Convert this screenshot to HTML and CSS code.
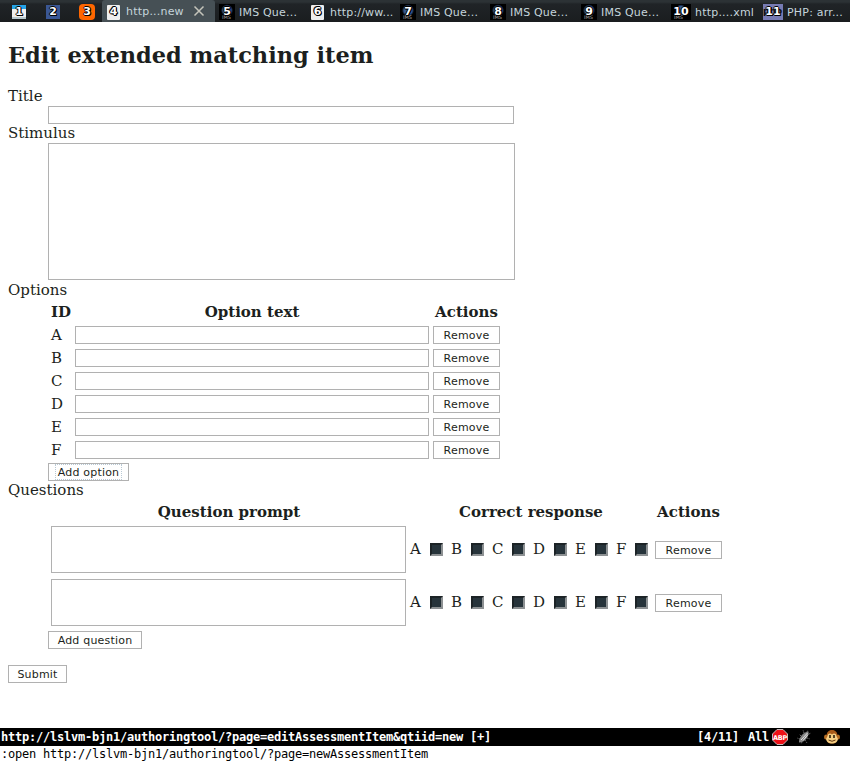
FILE: index.html
```html
<!DOCTYPE html>
<html lang="en">
<head>
<meta charset="utf-8">
<title>Edit extended matching item</title>
<link rel="stylesheet" href="styles.css">
</head>
<body>
<nav class="tabs">
  <div class="tab pinned p1"><span class="fav google"><b>1</b></span></div>
  <div class="tab pinned p2"><span class="fav blue"><b>2</b></span></div>
  <div class="tab pinned p3"><span class="fav orange"><b>3</b></span></div>
  <div class="tab active"><span class="fav page"><b>4</b></span><span class="name">http...new</span><svg class="close" viewBox="0 0 12 12"><path d="M1.500 1.500 10.500 10.500M10.500 1.500 1.500 10.500"/></svg></div>
  <div class="tab t5"><span class="fav ims"><i>IMS</i><b>5</b></span><span class="name">IMS Que...</span></div>
  <div class="tab t6"><span class="fav page"><b>6</b></span><span class="name">http://ww...</span></div>
  <div class="tab t7"><span class="fav ims"><i>IMS</i><b>7</b></span><span class="name">IMS Que...</span></div>
  <div class="tab t8"><span class="fav ims"><i>IMS</i><b>8</b></span><span class="name">IMS Que...</span></div>
  <div class="tab t9"><span class="fav ims"><i>IMS</i><b>9</b></span><span class="name">IMS Que...</span></div>
  <div class="tab t10"><span class="fav ims wide"><i>IMS</i><b>10</b></span><span class="name">http....xml</span></div>
  <div class="tab t11"><span class="fav php wide"><em>php</em><b>11</b></span><span class="name">PHP: arr...</span></div>
</nav>
<main>
  <h1>Edit extended matching item</h1>
  <form>
    <dl>
      <dt>Title</dt>
      <dd class="title-field"><input class="field" type="text" aria-label="Title"></dd>
      <dt>Stimulus</dt>
      <dd class="stimulus-field"><textarea class="field" aria-label="Stimulus"></textarea></dd>
      <dt class="options-label">Options</dt>
      <dd class="options">
        <div class="option-row head"><span>ID</span><span>Option text</span><span>Actions</span></div>
        <div class="option-row"><span>A</span><input class="field" type="text"><button type="button">Remove</button></div>
        <div class="option-row"><span>B</span><input class="field" type="text"><button type="button">Remove</button></div>
        <div class="option-row"><span>C</span><input class="field" type="text"><button type="button">Remove</button></div>
        <div class="option-row"><span>D</span><input class="field" type="text"><button type="button">Remove</button></div>
        <div class="option-row"><span>E</span><input class="field" type="text"><button type="button">Remove</button></div>
        <div class="option-row"><span>F</span><input class="field" type="text"><button type="button">Remove</button></div>
        <button type="button" class="add-option"><span>Add option</span></button>
      </dd>
      <dt class="questions-label">Questions</dt>
      <dd class="questions">
        <div class="question-row head"><span>Question prompt</span><span>Correct response</span><span>Actions</span></div>
        <div class="question-row"><textarea class="field"></textarea>
          <div class="responses"><label><span>A</span><input type="checkbox"></label><label><span>B</span><input type="checkbox"></label><label><span>C</span><input type="checkbox"></label><label><span>D</span><input type="checkbox"></label><label><span>E</span><input type="checkbox"></label><label><span>F</span><input type="checkbox"></label></div>
          <button type="button">Remove</button></div>
        <div class="question-row"><textarea class="field"></textarea>
          <div class="responses"><label><span>A</span><input type="checkbox"></label><label><span>B</span><input type="checkbox"></label><label><span>C</span><input type="checkbox"></label><label><span>D</span><input type="checkbox"></label><label><span>E</span><input type="checkbox"></label><label><span>F</span><input type="checkbox"></label></div>
          <button type="button">Remove</button></div>
        <button type="button" class="add-question">Add question</button>
      </dd>
    </dl>
    <button type="button" class="submit">Submit</button>
  </form>
</main>
<footer>
  <div class="status">
    <span class="url">http://lslvm-bjn1/authoringtool/?page=editAssessmentItem&amp;qtiid=new [+]</span>
    <span class="position">[4/11]</span><span class="all">All</span>
    <svg class="abp" viewBox="0 0 16 16"><path d="M5 .5h6L15.500 5v6L11 15.500H5L.5 11V5z" fill="#ed1118" stroke="#c8b8b8"/><text x="8" y="10.600" text-anchor="middle">ABP</text></svg>
    <svg class="bug" viewBox="0 0 16 16"><g stroke="#666" fill="none"><path d="M5 7 3 5M8 4 7 1M4 10 1 9M11 9l3 1M9 11l2 3M6 13l-1 2M11 3l1-2M13 5l2-1" stroke-dasharray="1.5 1"/></g><path d="M3 13.500C2.500 9 7 3 12.500 2.500 13.500 7 9 13.500 3 13.500z" fill="#858585"/><path d="m5 11 6.500-7M7 11.500l5-6" stroke="#e4e4e4"/></svg>
    <svg class="monkey" viewBox="0 0 16 16"><ellipse cx="2" cy="8" rx="2" ry="2.500" fill="#b86f24"/><ellipse cx="14" cy="8" rx="2" ry="2.500" fill="#b86f24"/><path d="M2.500 8C2.500 3 4.500 1 8 1S13.500 3 13.500 8 12 14.500 8 14.500 2.500 13 2.500 8z" fill="#a85a18"/><path d="M3.500 7C4 4 6.500 4 8 5.500 9.500 4 12 4 12.500 7L14 10C13.500 13 11 14.500 8 14.500S2.500 13 2 10z" fill="#f5cf83"/><path d="M6 6v3M10 6v3" stroke="#221505" stroke-width="1.500"/><path d="M4.500 11Q8 13.500 11.500 11" stroke="#5b300c" fill="none"/></svg>
  </div>
  <div class="command">:open http://lslvm-bjn1/authoringtool/?page=newAssessmentItem</div>
</footer>
</body>
</html>
```
FILE: styles.css
```css
* { box-sizing: border-box; }
body {
  margin: 0;
  height: 762px;
  display: flex;
  flex-direction: column;
  overflow: hidden;
  background: #fff;
  color: #1c1f20;
  font: 15px/18px "DejaVu Serif", serif;
}
.tabs {
  display: flex;
  height: 22px;
  flex: none;
  background: linear-gradient(#2c3235 0 2px, #202427 4px, #1a1d1f);
  font: 11px/22px "DejaVu Sans", sans-serif;
  letter-spacing: .2px;
  color: #c5d5db;
}
.tab { display: flex; align-items: center; height: 22px; flex: none; white-space: nowrap; }
.name { padding-top: 3px; height: 22px; line-height: 20px; }
.p1 { width: 45px; padding-left: 12px; }
.p2 { width: 34px; }
.p3 { width: 23px; }
.active { width: 113px; padding-left: 4px; background: #465055; border-radius: 3px 3px 0 0; }
.active .name { width: 67px; padding-top: 2px; }
.close { width: 12px; height: 12px; fill: none; stroke: #c5c5bb; stroke-width: 1.5; }
.t5 { width: 91px; padding-left: 4px; }
.t6 { width: 90px; padding-left: 4px; }
.t7 { width: 90px; padding-left: 4px; }
.t8 { width: 91px; padding-left: 4px; }
.t9 { width: 91px; padding-left: 4px; }
.t10 { width: 91px; padding-left: 3px; }
.t11 { width: 87px; padding-left: 4px; }
.fav {
  position: relative;
  width: 16px;
  height: 16px;
  margin: 2px 4px 0 0;
  flex: none;
  display: flex;
  align-items: center;
  justify-content: center;
  letter-spacing: 0;
}
.fav b {
  position: relative;
  font-size: 11px;
  line-height: 14px;
  color: #fff;
  text-shadow: 1px 0 #000, -1px 0 #000, 0 1px #000, 0 -1px #000, 1px 1px #000;
}
.fav i { position: absolute; bottom: 0; left: 3px; font: 5px/5px "DejaVu Sans", sans-serif; color: #aaa; }
.google { background: linear-gradient(#26a4e8 0 4px, #eee 4px 12px, #b8c8cd 12px); width: 14px; height: 14px; }
.blue { background: #3a5795; width: 14px; height: 14px; margin-left: 1px; }
.orange { background: #ff6600; border-radius: 4px; }
.page { background: #eee; width: 13px; height: 15px; margin-left: 1px; margin-right: 6px; border-radius: 1px; }
.page b { text-shadow: 1px 0 #000, -1px 0 #000, 0 1px #000, 0 -1px #000, 1px 1px #000, -1px -1px #345; }
.ims { background: radial-gradient(circle at 50% 40%, #36598f 0 4px, #000 6px); }
.wide { width: 20px; }
.php { background: #777bb3; }
.php em { position: absolute; left: 0; top: 0; font: bold 9px/14px "DejaVu Sans", sans-serif; color: #111; }
main { flex: 1; padding: 0 8px; }
h1 { margin: 20px 0 18px; font-size: 22.44px; line-height: 27px; }
dl, dd, dt { margin: 0; }
dt { height: 18px; }
dd { padding-left: 40px; }
.field {
  display: block;
  margin: 0;
  padding: 0;
  background: #fff;
  border: 1px solid #b1b1b1;
  border-radius: 0;
  resize: none;
  outline: 0;
}
.title-field { height: 19px; padding-top: 1px; }
.title-field .field { width: 466px; height: 18px; }
.stimulus-field { height: 139px; padding-top: 1px; }
.stimulus-field .field { width: 467px; height: 137px; }
button {
  display: block;
  height: 18px;
  margin: 0;
  padding: 1px 0 0;
  border: 1px solid #b1b1b1;
  background: #fff;
  color: #1c1f20;
  font: 11px/15px "DejaVu Sans", sans-serif;
  letter-spacing: .2px;
}
.options { height: 178px; }
.option-row {
  display: grid;
  grid-template-columns: 20px 354px 67px;
  column-gap: 4px;
  align-items: center;
  height: 18px;
  margin: 0 0 5px 3px;
}
.option-row .field { height: 18px; width: 354px; }
.head { font-weight: bold; text-align: center; }
.option-row.head { margin-top: 4px; }
.add-option { width: 81px; margin-top: -1px; padding: 0 6px; }
.add-option span { display: block; height: 16px; line-height: 15px; border: 1px dotted #b9c9d4; }
.question-row {
  display: grid;
  grid-template-columns: 355px 238px 67px;
  column-gap: 4px;
  align-items: center;
  height: 47px;
  margin: 0 0 6px 3px;
}
.question-row .field { width: 355px; height: 47px; }
.question-row button { width: 67px; margin-left: 3px; }
.question-row.head { grid-template-columns: 356px 244px 67px; column-gap: 2px; height: 18px; margin: 4px 0 5px 3px; }
.responses { display: grid; grid-template-columns: 33px 33px 33px 34px 33px 32px; column-gap: 8px; }
.responses label { display: flex; justify-content: space-between; align-items: center; height: 20px; }
.responses span { padding-bottom: 2px; }
.responses input {
  appearance: none;
  width: 13px;
  height: 13px;
  margin: 0;
  background: #27343b;
  border: 2px solid;
  border-color: #1c2326 #8d9193 #8d9193 #1c2326;
}
.add-question { width: 94px; margin-top: -1px; }
.submit { width: 59px; margin-top: 16px; }
footer { flex: none; height: 34px; font: 12px/18px "DejaVu Sans Mono", monospace; letter-spacing: -0.224px; color: #000; }
.status { display: flex; align-items: center; height: 18px; padding-left: 1px; background: #000; color: #fff; font-weight: bold; }
.url { width: 696px; }
.position { width: 51px; }
.all { width: 24px; }
.status svg { flex: none; width: 16px; height: 16px; }
.abp { margin-right: 8px; }
.abp text { font: bold 6.500px "DejaVu Sans", sans-serif; fill: #fff; letter-spacing: -.3px; }
.bug { margin-right: 12px; }
.command { height: 16px; padding-left: 1px; line-height: 17px; }
```
